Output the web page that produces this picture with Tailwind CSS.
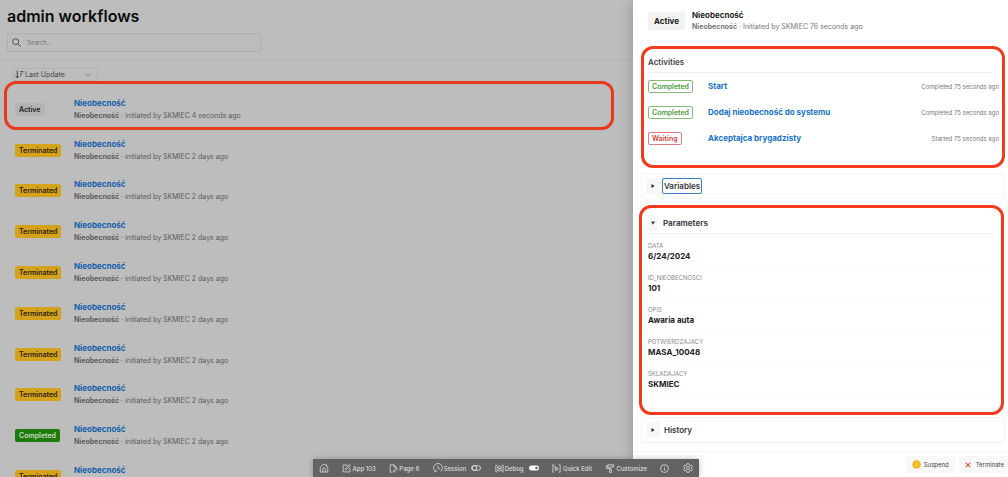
<!DOCTYPE html>
<html lang="pl">
<head>
<meta charset="utf-8">
<meta name="viewport" content="width=device-width, initial-scale=1">
<title>admin workflows</title>
<script src="https://cdn.jsdelivr.net/npm/@tailwindcss/browser@4"></script>
</head>
<body class="relative flex h-screen overflow-hidden bg-[#bdbdbd] font-['Inter',sans-serif] text-[#222]">

<svg class="hidden" aria-hidden="true">
  <symbol id="right" viewBox="0 0 8 8"><path d="M2 1.2 6 4 2 6.8z" fill="currentColor"/></symbol>
  <symbol id="down" viewBox="0 0 8 8"><path d="M1.2 2h5.6L4 6.2z" fill="currentColor"/></symbol>
</svg>

<main class="min-w-0 flex-1 overflow-hidden">
  <header class="border-b border-[#b5b5b5] px-[7px] pt-1.5 pb-[7px]">
    <h1 class="text-[16px] leading-5 font-semibold text-[#0c0c0c]">admin workflows</h1>
    <label class="mt-[7px] flex h-[19px] w-[254px] items-center gap-1.5 rounded-xs border border-[#b0b0b0] px-1 text-[#444]">
      <svg class="size-[9px] shrink-0" viewBox="0 0 16 16" fill="none" stroke="currentColor" stroke-width="1.6"><circle cx="6.5" cy="6.5" r="5.3"/><path d="m10.5 10.5 5 5"/></svg>
      <input type="text" aria-label="Search" placeholder="Search..." class="min-w-0 flex-1 text-[6px] outline-none placeholder:text-[#777]">
    </label>
  </header>

  <div class="flex pt-2 pl-[13px]">
    <label class="relative flex h-[13px] w-[85px] items-center rounded-xs border border-[#b2b2b2]">
      <svg class="pointer-events-none absolute left-px size-[9px] text-[#333]" viewBox="0 0 16 16" fill="none" stroke="currentColor" stroke-width="1.6"><path d="M4 1v13M1 11l3 3 3-3M9 3h6M9 7h4M9 11h2"/></svg>
      <select aria-label="Sort by" class="w-full appearance-none pl-[11px] text-[7px] leading-[11px] text-[#444]"><option>Last Update</option></select>
      <svg class="pointer-events-none absolute right-1.5 size-[6px] text-[#666]" viewBox="0 0 8 8" fill="none" stroke="currentColor"><path d="m1 2.5 3 3 3-3"/></svg>
    </label>
  </div>

  <ul id="list" class="relative mt-2 grid h-[408px] auto-rows-fr pl-[15px]">
  </ul>
</main>

<aside class="relative flex w-[375px] shrink-0 flex-col bg-white shadow-[0_0_14px_rgba(0,0,0,0.22)]">
  <header class="flex h-[42px] items-center gap-[7px] pl-[15px]">
    <span class="rounded-xs bg-[#f2f2f2] px-1.5 py-[3px] text-[8px] leading-3 font-bold">Active</span>
    <div>
      <h2 class="text-[8px] leading-3 font-bold">Nieobecność</h2>
      <p class="text-[7px] leading-3 text-[#777]"><b class="font-bold">Nieobecność</b> · Initiated by SKMIEC 76 seconds ago</p>
    </div>
  </header>

  <div class="flex-1 pr-[3px] pl-2">
    <section class="mt-1 h-[122px] rounded-xl border-3 border-[#f03c1c] pt-1 pr-[3px] pl-1">
      <h3 class="text-[8px] leading-[18px] font-semibold text-[#444]">Activities</h3>
      <div class="mt-px mr-2 border-b border-[#efefef]"></div>
      <ul class="text-[7px]">
        <li class="flex h-[26px] items-center">
          <span class="w-[60px]"><span class="inline-block rounded-xs border border-[#83bd74] px-[3px] leading-[11px] font-semibold text-[#4d9b3c]">Completed</span></span>
          <a href="#" class="flex-1 text-[8px] font-bold text-[#1672c9]">Start</a>
          <span class="text-[6px] text-[#777]">Completed 75 seconds ago</span>
        </li>
        <li class="flex h-[26px] items-center">
          <span class="w-[60px]"><span class="inline-block rounded-xs border border-[#83bd74] px-[3px] leading-[11px] font-semibold text-[#4d9b3c]">Completed</span></span>
          <a href="#" class="flex-1 text-[8px] font-bold text-[#1672c9]">Dodaj nieobecność do systemu</a>
          <span class="text-[6px] text-[#777]">Completed 75 seconds ago</span>
        </li>
        <li class="flex h-[26px] items-center">
          <span class="w-[60px]"><span class="inline-block rounded-xs border border-[#e07d7d] px-[3px] leading-[11px] font-semibold text-[#d04444]">Waiting</span></span>
          <a href="#" class="flex-1 text-[8px] font-bold text-[#1672c9]">Akceptajca brygadzisty</a>
          <span class="text-[6px] text-[#777]">Started 75 seconds ago</span>
        </li>
      </ul>
    </section>

    <section class="mt-[5px] flex h-[26px] items-center gap-0.5 rounded-xs border border-[#f5f5f5] pl-1">
      <button aria-label="Expand Variables" class="grid h-4 w-[14px] place-items-center rounded-xs bg-[#f8f8f8]"><svg class="size-[6px]"><use href="#right"/></svg></button>
      <h3 class="rounded-xs border border-[#3a80c8] px-px text-[8px] leading-[14px] font-semibold text-[#333]">Variables</h3>
    </section>

    <section class="-ml-0.5 mt-1.5 mr-px h-[210px] rounded-xl border-3 border-[#f03c1c] pt-1 pl-1.5">
      <div class="mr-2 flex h-[22px] items-center gap-[5px] border-b border-[#efefef] text-[#444]">
        <button aria-label="Collapse Parameters" class="grid h-4 w-[10px] place-items-center rounded-xs bg-[#f8f8f8]"><svg class="size-[6px]"><use href="#down"/></svg></button>
        <h3 class="text-[8px] font-bold">Parameters</h3>
      </div>
      <dl id="params" class="mr-2 pt-1"></dl>
    </section>

    <section class="mt-0.5 flex h-[26px] items-center gap-1 rounded-xs border border-[#f3f3f3] pl-1">
      <button aria-label="Expand History" class="grid h-4 w-[14px] place-items-center rounded-xs bg-[#f8f8f8]"><svg class="size-[6px]"><use href="#right"/></svg></button>
      <h3 class="text-[8px] font-semibold text-[#333]">History</h3>
    </section>
  </div>

  <footer class="flex h-[26px] items-center justify-end gap-1 border-t border-[#f5f5f5] text-[6px] text-[#444]">
    <button class="flex h-[18px] items-center gap-[3px] rounded-xs bg-[#f8f8f8] px-1.5">
      <svg class="size-[9px]" viewBox="0 0 16 16"><circle cx="8" cy="8" r="7.5" fill="#f8b91e"/><path d="M6.3 5v6M9.700 5v6" stroke="#ffd97c" stroke-width="1.4"/></svg>Suspend
    </button>
    <button class="flex h-[18px] items-center gap-[5px] rounded-xs bg-[#f8f8f8] pr-1 pl-1.5">
      <svg class="size-[6px]" viewBox="0 0 8 8" stroke="#dc3434" stroke-width="1.4"><path d="m1 1 6 6M7 1 1 7"/></svg>Terminate
    </button>
  </footer>
</aside>

<nav aria-label="Developer toolbar" class="absolute right-0 bottom-0 left-1 mx-auto flex h-[18px] w-[386px] items-center justify-between bg-[#636363] px-1.5 text-[6px] font-medium text-[#dedede] shadow-[0_0_6px_rgba(0,0,0,0.25)]">
  <button aria-label="Home"><svg class="size-[10px]" viewBox="0 0 16 16" fill="none" stroke="currentColor" stroke-width="1.3"><path d="M2 6.5 8 1.5l6 5v8H2zM6 14.500V10a2 2 0 0 1 4 0v4.500M12 5V2"/></svg></button>
  <button class="flex items-center gap-px"><svg class="size-[9px]" viewBox="0 0 16 16" fill="none" stroke="currentColor" stroke-width="1.4"><path d="M10 2H2v12h12V7M6 10l.7-2.700L13 1l2 2-6.300 6.300z"/></svg>App 103</button>
  <button class="flex items-center gap-px"><svg class="size-[9px]" viewBox="0 0 16 16" fill="none" stroke="currentColor" stroke-width="1.4"><path d="M6 14.500H2v-13h7l4 4V7M9 1.500v4h4M8 14l.5-2.500L13 7l2 2-4.500 4.500z"/></svg>Page 8</button>
  <button class="flex items-center gap-px"><svg class="size-[10px]" viewBox="0 0 16 16" fill="none" stroke="currentColor" stroke-width="1.3"><path d="M4 13.500a7 7 0 1 1 8 0M2 14h3v-3M8 4v4.500l3 1.500"/></svg>Session<svg class="ml-1 h-[6px] w-[10px]" viewBox="0 0 20 12" fill="none" stroke="currentColor" stroke-width="1.8"><rect x="1" y="1.500" width="18" height="9" rx="4.500"/><circle cx="7" cy="6" r="4.500"/></svg></button>
  <button class="flex items-center gap-px"><svg class="size-[9px]" viewBox="0 0 16 16" fill="none" stroke="currentColor" stroke-width="1.4"><path d="M4 2H1.500v12H4M12 2h2.500v12H12M5.500 6a2.500 2.500 0 0 1 5 0v4a2.500 2.500 0 0 1-5 0zM5.500 8h5M3.500 5l2 1.500M12.500 5l-2 1.500M3.500 12l2-1.500M12.500 12l-2-1.500"/></svg>Debug<svg class="ml-1 h-[6px] w-[10px]" viewBox="0 0 20 12"><rect x="0" y="1" width="20" height="10" rx="5" fill="#fff"/><circle cx="15" cy="6" r="2.500" fill="#636363"/></svg></button>
  <button class="flex items-center gap-0.5"><svg class="size-[9px]" viewBox="0 0 16 16" fill="none" stroke="currentColor" stroke-width="1.400"><path d="M4 1.500H1.500v13H4M12 1.500h2.500v13H12M5 4l6 4-3 .8L6.500 12zM8.500 9l3 3"/></svg>Quick Edit</button>
  <button class="flex items-center gap-0.5"><svg class="size-[9px]" viewBox="0 0 16 16" fill="none" stroke="currentColor" stroke-width="1.500"><path d="M3 1.500h10v4H3zM3 3.500H1V8h7v2M6.500 10h3v5h-3zM13 3h2"/></svg>Customize</button>
  <button aria-label="Information"><svg class="size-[9px]" viewBox="0 0 16 16" fill="none" stroke="currentColor" stroke-width="1.400"><circle cx="8" cy="8" r="7"/><path d="M8 7v5M8 4v1.500"/></svg></button>
  <button aria-label="Settings"><svg class="size-[10px]" viewBox="0 0 16 16" fill="none" stroke="currentColor" stroke-width="1.300"><path d="M6.500 1h3l.5 2.200 1.300.8 2.200-.7L15 6l-1.700 1.500v1L15 10l-1.500 2.700-2.200-.7-1.300.8-.5 2.200h-3L6 12.800 4.700 12l-2.200.7L1 10l1.700-1.500v-1L1 6l1.500-2.700 2.200.7L6 3.200z"/><circle cx="8" cy="8" r="2.500"/></svg></button>
</nav>

<script>
  const styles = {
    Active: 'bg-[#b3b3b3] text-[#222]',
    Terminated: 'bg-[#d5a21c] text-[#2c2105]',
    Completed: 'bg-[#1f7a0c] text-[#c9dcc4]'
  };
  const states = ['Active', 'Terminated', 'Terminated', 'Terminated', 'Terminated', 'Terminated', 'Terminated', 'Terminated', 'Completed', 'Terminated'];
  document.getElementById('list').innerHTML = states.map((s, i) => `
    <li class="flex items-center">
      <span class="w-[59px] text-[7px]"><span class="inline-block rounded-xs px-1 leading-[13px] font-semibold ${styles[s]}">${s}</span></span>
      <div>
        <a href="#" class="block text-[8px] leading-3 font-bold text-[#1260ac]">Nieobecność</a>
        <p class="text-[7px] leading-[13px] text-[#5c5c5c]"><b class="font-bold">Nieobecność</b> · initiated by SKMIEC ${i ? '2 days' : '4 seconds'} ago</p>
      </div>
    </li>`).join('') + '<li aria-hidden="true" class="pointer-events-none absolute -top-2 right-[19px] left-1 h-[49px] rounded-xl border-3 border-[#e83a1c]"></li>';
  document.getElementById('params').innerHTML = [
    ['DATA', '6/24/2024'], ['ID_NIEOBECNOSCI', '101'], ['OPIS', 'Awaria auta'], ['POTWIERDZAJACY', 'MASA_10048'], ['SKLADAJACY', 'SKMIEC']
  ].map(([k, v]) => `
    <div class="h-8 border-b border-[#fafafa] pt-1">
      <dt class="text-[6px] leading-2 text-[#888]">${k}</dt>
      <dd class="text-[8px] leading-3 font-bold">${v}</dd>
    </div>`).join('');
</script>
</body>
</html>
